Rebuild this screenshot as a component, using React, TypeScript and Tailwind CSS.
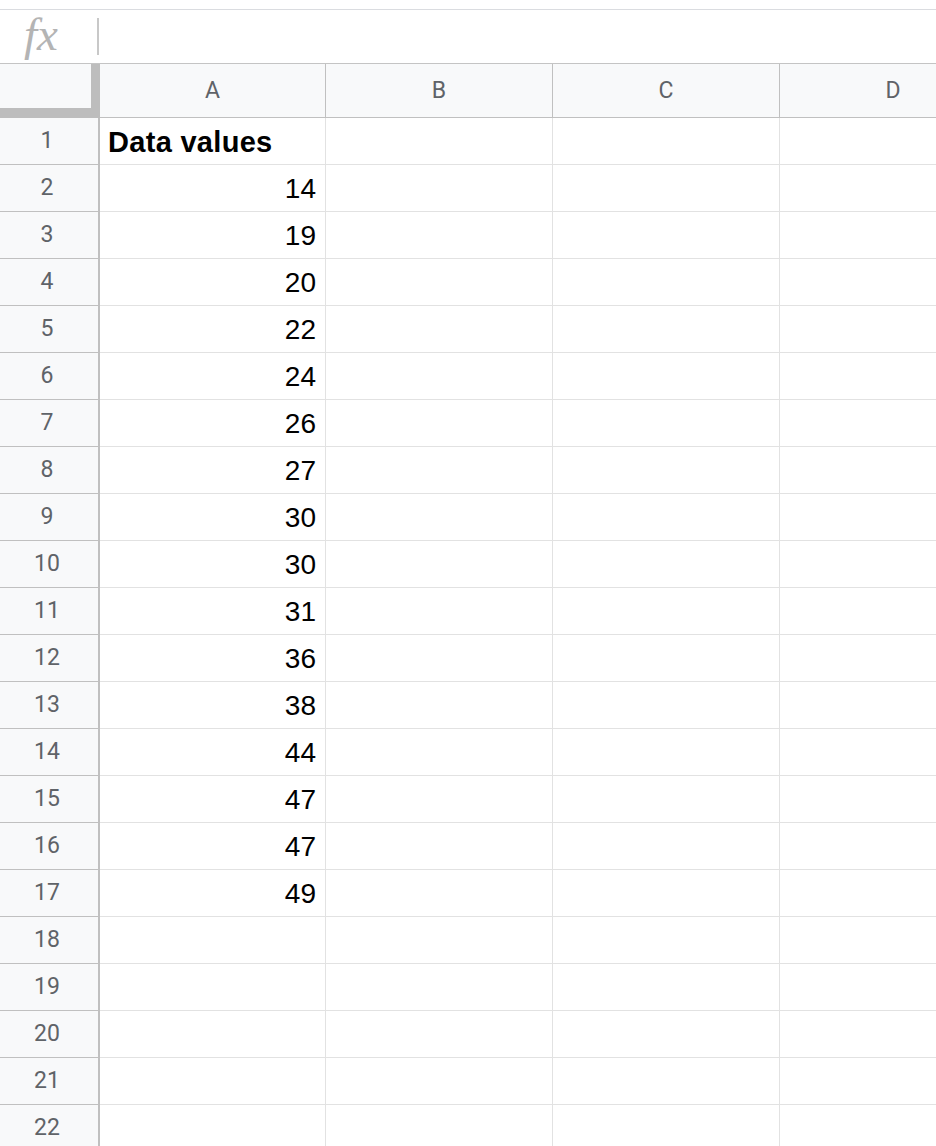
const values: (number | null)[] = [14, 19, 20, 22, 24, 26, 27, 30, 30, 31, 36, 38, 44, 47, 47, 49];

const columns = ["A", "B", "C", "D"];

function FormulaBar() {
  return (
    <div className="flex h-[55px] items-center border-y border-t-[#dadce0] border-b-[#c4c4c4] bg-white">
      <div className="flex w-[97px] items-center pl-[24px] pb-[4px]">
        <span className="font-['Liberation_Serif',serif] text-[47px] italic leading-none text-[#b4b4b4]">
          fx
        </span>
      </div>
      <div className="h-[37px] w-[2px] bg-[#c8c8c8]" />
    </div>
  );
}

function HeaderRow() {
  return (
    <div className="flex h-[54px] bg-[#f8f9fa] font-['Roboto',sans-serif] text-[23px] text-[#5f6368]">
      <div className="h-full w-[100px] shrink-0 border-r-[9px] border-b-[10px] border-[#bdbdbd]" />
      {columns.map((c, i) => (
        <div
          key={c}
          className={`flex shrink-0 items-center justify-center border-b border-[#c0c0c0] pt-[2px] ${
            i === 0 ? "w-[226px] border-r" : "w-[227px] border-r"
          }`}
        >
          {c}
        </div>
      ))}
    </div>
  );
}

function Row({ n }: { n: number }) {
  const value = n === 1 ? null : values[n - 2] ?? null;
  return (
    <div className="flex h-[47px]">
      <div className="flex w-[100px] shrink-0 items-center justify-center border-r-2 border-b border-[#c0c0c0] bg-[#f8f9fa] pr-[4px] font-['Roboto',sans-serif] text-[23px] text-[#5f6368]">
        {n}
      </div>
      <div className="flex w-[226px] shrink-0 items-end border-r border-b border-[#e2e2e2] pl-[8px] pr-[9px] pb-[6px] text-[28px] leading-[32px] text-black">
        {n === 1 ? (
          <span className="text-[29px] font-bold tracking-[0.3px]">Data values</span>
        ) : (
          <span className="ml-auto">{value}</span>
        )}
      </div>
      <div className="w-[227px] shrink-0 border-r border-b border-[#e2e2e2]" />
      <div className="w-[227px] shrink-0 border-r border-b border-[#e2e2e2]" />
      <div className="w-[227px] shrink-0 border-r border-b border-[#e2e2e2]" />
    </div>
  );
}

export default function App() {
  const rows = Array.from({ length: 22 }, (_, i) => i + 1);
  return (
    <div className="h-[1146px] w-[936px] overflow-hidden bg-white font-['Liberation_Sans',Arial,sans-serif]">
      <div className="h-[9px]" />
      <FormulaBar />
      <HeaderRow />
      {rows.map((n) => (
        <Row key={n} n={n} />
      ))}
    </div>
  );
}
